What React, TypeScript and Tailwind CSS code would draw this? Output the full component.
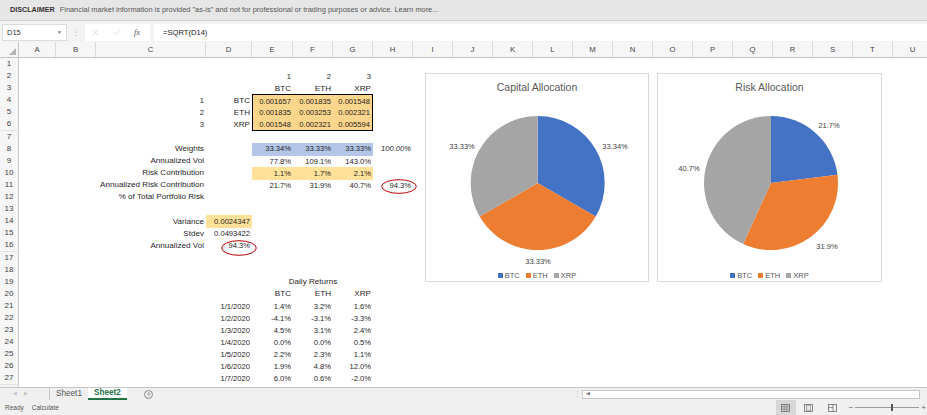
import React from 'react';
import { X, Check, Plus } from 'lucide-react';

type Cell = { c: string; t: string; a?: 'l' | 'r' | 'c'; cls?: string; ring?: 'h' | 'd' };

const LETTERS = ['A','B','C','D','E','F','G','H','I','J','K','L','M','N','O','P','Q','R','S','T','U'];
const GRID = 'grid grid-cols-[19px_37px_40px_110px_46px_41px_repeat(16,40px)]';

const MAT = 'bg-[#fcd68c]';
const YEL = 'bg-[#ffe19a]';
const BLUE = 'bg-[#b4c6e7]';
const LBL = 'text-[8.1px]';

const SHEET: Record<number, Cell[]> = {
  2: [{ c: 'E', t: '1' }, { c: 'F', t: '2' }, { c: 'G', t: '3' }],
  3: [{ c: 'E', t: 'BTC', cls: LBL }, { c: 'F', t: 'ETH', cls: LBL }, { c: 'G', t: 'XRP', cls: LBL }],
  4: [
    { c: 'C', t: '1' }, { c: 'D', t: 'BTC', cls: LBL },
    { c: 'E', t: '0.001657', cls: `${MAT} border-l-[1.5px] border-t-[1.5px] border-black` },
    { c: 'F', t: '0.001835', cls: `${MAT} border-t-[1.5px] border-black` },
    { c: 'G', t: '0.001548', cls: `${MAT} border-r-[1.5px] border-t-[1.5px] border-black` },
  ],
  5: [
    { c: 'C', t: '2' }, { c: 'D', t: 'ETH', cls: LBL },
    { c: 'E', t: '0.001835', cls: `${MAT} border-l-[1.5px] border-black` },
    { c: 'F', t: '0.003253', cls: MAT },
    { c: 'G', t: '0.002321', cls: `${MAT} border-r-[1.5px] border-black` },
  ],
  6: [
    { c: 'C', t: '3' }, { c: 'D', t: 'XRP', cls: LBL },
    { c: 'E', t: '0.001548', cls: `${MAT} border-l-[1.5px] border-b-[1.5px] border-black` },
    { c: 'F', t: '0.002321', cls: `${MAT} border-b-[1.5px] border-black` },
    { c: 'G', t: '0.005594', cls: `${MAT} border-r-[1.5px] border-b-[1.5px] border-black` },
  ],
  8: [
    { c: 'C', t: 'Weights', cls: LBL },
    { c: 'E', t: '33.34%', cls: BLUE }, { c: 'F', t: '33.33%', cls: BLUE }, { c: 'G', t: '33.33%', cls: BLUE },
    { c: 'H', t: '100.00%', cls: 'italic' },
  ],
  9: [{ c: 'C', t: 'Annualized Vol', cls: LBL }, { c: 'E', t: '77.8%' }, { c: 'F', t: '109.1%' }, { c: 'G', t: '143.0%' }],
  10: [
    { c: 'C', t: 'Risk Contribution', cls: LBL },
    { c: 'E', t: '1.1%', cls: YEL }, { c: 'F', t: '1.7%', cls: YEL }, { c: 'G', t: '2.1%', cls: YEL },
  ],
  11: [
    { c: 'C', t: 'Annualized Risk Contribution', cls: LBL },
    { c: 'E', t: '21.7%' }, { c: 'F', t: '31.9%' }, { c: 'G', t: '40.7%' },
    { c: 'H', t: '94.3%', ring: 'h' },
  ],
  12: [{ c: 'C', t: '% of Total Portfolio Risk', cls: LBL }],
  14: [{ c: 'C', t: 'Variance', cls: LBL }, { c: 'D', t: '0.0024347', cls: YEL }],
  15: [{ c: 'C', t: 'Stdev', cls: LBL }, { c: 'D', t: '0.0493422' }],
  16: [{ c: 'C', t: 'Annualized Vol', cls: LBL }, { c: 'D', t: '94.3%', ring: 'd' }],
  19: [{ c: 'F', t: 'Daily Returns', a: 'c', cls: LBL }],
  20: [{ c: 'E', t: 'BTC', cls: LBL }, { c: 'F', t: 'ETH', cls: LBL }, { c: 'G', t: 'XRP', cls: LBL }],
};

const RETURNS: [string, string, string, string][] = [
  ['1/1/2020', '1.4%', '3.2%', '1.6%'],
  ['1/2/2020', '-4.1%', '-3.1%', '-3.3%'],
  ['1/3/2020', '4.5%', '3.1%', '2.4%'],
  ['1/4/2020', '0.0%', '0.0%', '0.5%'],
  ['1/5/2020', '2.2%', '2.3%', '1.1%'],
  ['1/6/2020', '1.9%', '4.8%', '12.0%'],
  ['1/7/2020', '6.0%', '0.6%', '-2.0%'],
  ['1/8/2020', '-2.9%', '-5.4%', '-3.6%'],
];
RETURNS.forEach((r, i) => {
  SHEET[21 + i] = [{ c: 'D', t: r[0] }, { c: 'E', t: r[1] }, { c: 'F', t: r[2] }, { c: 'G', t: r[3] }];
});

function Ring({ kind }: { kind: 'h' | 'd' }) {
  const pos = kind === 'h' ? 'left-[8px] top-[0px] w-[36px] h-[15px]' : 'left-[15px] top-[1px] w-[36px] h-[16px]';
  return (
    <svg className={`absolute ${pos} overflow-visible pointer-events-none`} viewBox="0 0 36 16" preserveAspectRatio="none">
      <ellipse cx="18" cy="8" rx="17.3" ry="7.3" fill="none" stroke="#c00000" strokeWidth="1" />
    </svg>
  );
}

function SheetRow({ n }: { n: number }) {
  const cells = SHEET[n] || [];
  return (
    <div className={`${GRID} h-[12.1px]`}>
      <div className="h-full flex items-center justify-center bg-[#f6f6f6] border-r border-[#c9c9c9] border-b border-b-[#e3e3e3] text-[8px] text-[#444]">
        {n}
      </div>
      {LETTERS.map((L) => {
        const cell = cells.find((x) => x.c === L);
        if (!cell) return <div key={L} className="h-full" />;
        const align = cell.a === 'c' ? 'justify-center' : cell.a === 'l' ? 'justify-start' : 'justify-end';
        return (
          <div key={L} className={`relative h-full flex items-center ${align} px-[2px] whitespace-nowrap text-[7.6px] text-[#1f1f1f] ${cell.cls || ''}`}>
            {cell.t}
            {cell.ring && <Ring kind={cell.ring} />}
          </div>
        );
      })}
    </div>
  );
}

const COLORS = ['#4472c4', '#ed7d31', '#a5a5a5'];

function slice(cx: number, cy: number, r: number, a0: number, a1: number) {
  const p = (a: number) => [cx + r * Math.sin((a * Math.PI) / 180), cy - r * Math.cos((a * Math.PI) / 180)];
  const [x0, y0] = p(a0);
  const [x1, y1] = p(a1);
  const large = a1 - a0 > 180 ? 1 : 0;
  return `M${cx} ${cy} L${x0} ${y0} A${r} ${r} 0 ${large} 1 ${x1} ${y1} Z`;
}

type Label = { t: string; x: number; y: number };

function PieChart({ title, vals, labels, width, cx }: { title: string; vals: number[]; labels: Label[]; width: string; cx: number }) {
  const total = vals.reduce((s, v) => s + v, 0);
  let a = 0;
  const paths = vals.map((v, i) => {
    const a0 = a;
    a += (v / total) * 360;
    return <path key={i} d={slice(cx, 81, 67, a0, a)} fill={COLORS[i]} />;
  });
  return (
    <div className={`${width} h-[209px] bg-white border border-[#d9d9d9] flex flex-col`}>
      <div className="h-[28px] flex items-center justify-center text-[10.5px] text-[#595959]">{title}</div>
      <svg width="100%" height="169" className="block">
        {paths}
        {labels.map((l, i) => (
          <text key={i} x={l.x} y={l.y} textAnchor="middle" dominantBaseline="central" fontSize="7.5" fill="#404040" fontFamily="Liberation Sans, Arial, sans-serif">
            {l.t}
          </text>
        ))}
      </svg>
      <div className="flex justify-center items-center gap-[6px] text-[7.5px] text-[#595959]">
        {['BTC', 'ETH', 'XRP'].map((s, i) => (
          <div key={s} className="flex items-center gap-[2px]">
            <span className={`w-[5px] h-[5px] ${i === 0 ? 'bg-[#4472c4]' : i === 1 ? 'bg-[#ed7d31]' : 'bg-[#a5a5a5]'}`} />
            {s}
          </div>
        ))}
      </div>
    </div>
  );
}

function ViewIcon({ kind }: { kind: number }) {
  return (
    <svg width="9" height="8" viewBox="0 0 9 8" className="block">
      <rect x="0.5" y="0.5" width="8" height="7" fill="none" stroke="#6b6b6b" strokeWidth="0.8" />
      {kind === 0 && (
        <path d="M3.2 0.5V7.5M5.8 0.5V7.5M0.5 2.8H8.5M0.5 5.2H8.5" stroke="#6b6b6b" strokeWidth="0.6" />
      )}
      {kind === 1 && <rect x="2.3" y="1.8" width="4.4" height="4.4" fill="none" stroke="#6b6b6b" strokeWidth="0.6" />}
      {kind === 2 && <path d="M0.5 3.5H5V0.5M5 3.5V7.5" stroke="#6b6b6b" strokeWidth="0.7" fill="none" />}
    </svg>
  );
}

export default function App() {
  const rows = Array.from({ length: 28 }, (_, i) => i + 1);
  return (
    <div className="relative w-[927px] h-[415px] overflow-hidden bg-white flex flex-col font-['Liberation_Sans',Arial,sans-serif]">
      {/* disclaimer */}
      <div className="h-[21px] shrink-0 bg-[#e6e6e6] border-b border-[#d2d2d2] flex items-center px-[10px] gap-[5px] text-[7.4px] whitespace-nowrap">
        <span className="font-semibold text-[#333] text-[7.2px]">DISCLAIMER</span>
        <span className="text-[#555]">
          Financial market information is provided "as-is" and not for professional or trading purposes or advice. Learn more...
        </span>
      </div>

      {/* formula bar */}
      <div className="h-[21px] shrink-0 bg-[#f3f3f3] flex items-center pl-[2px] pt-[3px] pb-[1px]">
        <div className="w-[65px] h-full bg-white border border-[#dcdcdc] flex items-center justify-between px-[4px] text-[7.5px] text-[#333]">
          <span>D15</span>
          <span className="text-[5px] text-[#777]">▼</span>
        </div>
        <span className="w-[18px] text-center text-[8px] text-[#bbb]">⋮</span>
        <div className="w-[65px] h-full bg-white flex items-center pl-[6px]">
          <X size={9} strokeWidth={1.3} className="text-[#bcbcbc]" />
          <Check size={9} strokeWidth={1.3} className="text-[#bcbcbc] ml-[13px]" />
          <span className="italic text-[8.5px] text-[#555] font-['Liberation_Serif',serif] ml-[12px]">fx</span>
        </div>
        <div className="flex-1 h-full bg-white ml-[4px] flex items-center px-[9px] text-[7.6px] text-[#222]">=SQRT(D14)</div>
      </div>

      {/* column headers */}
      <div className={`${GRID} h-[16px] shrink-0 bg-[#f6f6f6] border-b border-[#c6c6c6]`}>
        <div className="relative h-full border-r border-[#c6c6c6]">
          <svg width="7" height="7" className="absolute right-[2px] bottom-[2px]">
            <path d="M7 0V7H0Z" fill="#b5b5b5" />
          </svg>
        </div>
        {LETTERS.map((L) => (
          <div key={L} className="h-full flex items-center justify-center text-[7.8px] text-[#444] border-r border-[#dadada]">
            {L}
          </div>
        ))}
      </div>

      {/* sheet body */}
      <div className="relative flex-1 overflow-hidden">
        {rows.map((n) => (
          <SheetRow key={n} n={n} />
        ))}
        <div className="absolute left-[425px] top-[15px]">
          <PieChart
            title="Capital Allocation"
            width="w-[224px]"
            cx={111.7}
            vals={[33.34, 33.33, 33.33]}
            labels={[
              { t: '33.34%', x: 189, y: 44 },
              { t: '33.33%', x: 36, y: 44 },
              { t: '33.33%', x: 112, y: 159 },
            ]}
          />
        </div>
        <div className="absolute left-[657px] top-[15px]">
          <PieChart
            title="Risk Allocation"
            width="w-[225px]"
            cx={113}
            vals={[21.7, 31.9, 40.7]}
            labels={[
              { t: '21.7%', x: 171, y: 23 },
              { t: '40.7%', x: 31, y: 66 },
              { t: '31.9%', x: 169, y: 144 },
            ]}
          />
        </div>
      </div>

      {/* sheet tabs */}
      <div className="h-[13px] shrink-0 bg-[#f0f0f0] border-t border-[#c6c6c6] flex items-stretch text-[8.2px]">
        <div className="w-[50px] flex items-center gap-[7px] pl-[13px] text-[5px] text-[#c3c3c3] border-r border-[#c6c6c6]">
          <span>◀</span>
          <span>▶</span>
        </div>
        <div className="px-[6px] flex items-center text-[#555]">Sheet1</div>
        <div className="px-[6px] flex items-center bg-white font-bold text-[#217346] border-b-2 border-[#217346]">Sheet2</div>
        <div className="w-[44px] flex items-center justify-center">
          <div className="w-[9px] h-[9px] rounded-full border border-[#8a8a8a] flex items-center justify-center">
            <Plus size={6} strokeWidth={2} className="text-[#777]" />
          </div>
        </div>
        <div className="flex-1" />
        <span className="w-[10px] flex items-center justify-center text-[7px] text-[#bbb]">⋮</span>
        <div className="w-[338px] my-[1.5px] bg-white border border-[#c6c6c6] flex items-center pl-[3px] text-[5px] text-[#777] mr-[7px]">
          ◀
        </div>
      </div>

      {/* status bar */}
      <div className="h-[15px] shrink-0 bg-[#f0f0f0] flex items-center text-[6.5px] text-[#555] pl-[5px]">
        <span>Ready</span>
        <span className="ml-[8px]">Calculate</span>
        <div className="flex-1" />
        <div className="w-[20px] h-full bg-[#d7d7d7] flex items-center justify-center">
          <ViewIcon kind={0} />
        </div>
        <div className="w-[25px] flex justify-center"><ViewIcon kind={1} /></div>
        <div className="w-[24px] flex justify-center"><ViewIcon kind={2} /></div>
        <div className="flex items-center gap-[2px] ml-[4px] pr-[1px]">
          <span className="text-[8px] text-[#666]">−</span>
          <div className="relative w-[64px] h-[1px] bg-[#9a9a9a]">
            <div className="absolute left-[36px] -top-[3px] w-[2px] h-[7px] bg-[#555]" />
          </div>
          <span className="text-[8px] text-[#666]">+</span>
        </div>
      </div>
    </div>
  );
}
